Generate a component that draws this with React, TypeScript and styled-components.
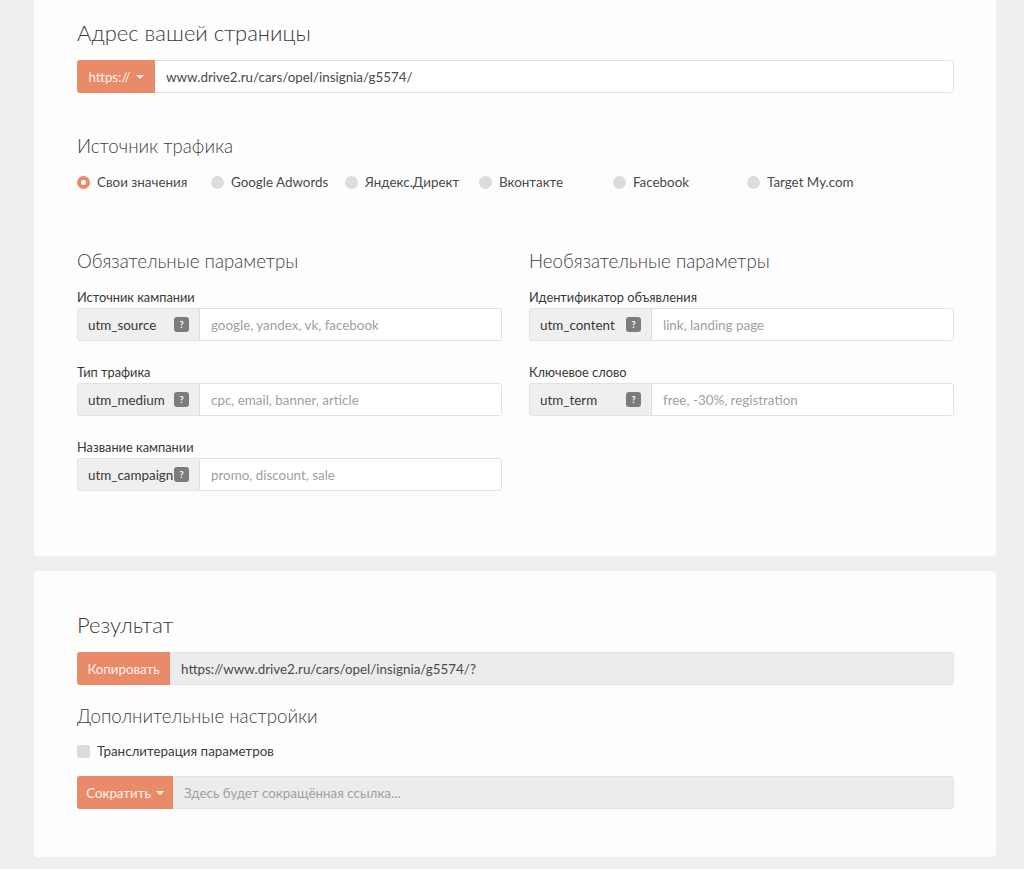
import React from "react";
import styled, { createGlobalStyle } from "styled-components";

const ORANGE = "#e98a68";

const Global = createGlobalStyle`
  html, body { margin: 0; padding: 0; }
  body {
    background: #efeff0;
    font-family: "Lato", "Open Sans", sans-serif;
    color: #3d3d3d;
  }
  * { box-sizing: border-box; }
`;

const Page = styled.div`
  display: flex;
  flex-direction: column;
  gap: 15px;
  padding: 0 28px 12px 34px;
`;

const Card = styled.section<{ $top: number; $bottom: number }>`
  background: #fdfdfd;
  border-radius: ${(p) => (p.$top < 25 ? "0 0 4px 4px" : "4px")};
  padding: ${(p) => p.$top}px 42px ${(p) => p.$bottom}px 43px;
  display: flex;
  flex-direction: column;
`;

const Title = styled.h2<{ $mt?: number; $mb?: number }>`
  margin: ${(p) => p.$mt ?? 0}px 0 ${(p) => p.$mb ?? 0}px;
  font-size: 22px;
  font-weight: 300;
  color: #3a3a3a;
  line-height: 28px;
`;

const SubTitle = styled.h3<{ $mt?: number; $mb?: number }>`
  margin: ${(p) => p.$mt ?? 0}px 0 ${(p) => p.$mb ?? 0}px;
  font-size: 18.7px;
  font-weight: 300;
  color: #3f3f3f;
  line-height: 24px;
`;

const Group = styled.div`
  display: flex;
  height: 33px;
  border-radius: 3px;
  overflow: hidden;
`;

const OrangeBtn = styled.div<{ $w: number }>`
  width: ${(p) => p.$w}px;
  flex: none;
  background: ${ORANGE};
  color: #fff3ee;
  font-size: 13.3px;
  display: flex;
  align-items: center;
  justify-content: center;
  gap: 5px;
`;

const Caret = styled.span`
  width: 0;
  height: 0;
  border-left: 4px solid transparent;
  border-right: 4px solid transparent;
  border-top: 4px solid #fff3ee;
  margin-top: 1px;
`;

const Field = styled.div<{ $filled?: boolean; $muted?: boolean }>`
  flex: 1;
  display: flex;
  align-items: center;
  padding: 0 11px;
  font-size: 13.4px;
  color: ${(p) => (p.$muted ? "#a0a0a0" : "#4a4a4a")};
  background: ${(p) => (p.$filled ? "#ececed" : "#fff")};
  border: 1px solid ${(p) => (p.$filled ? "#e4e4e5" : "#e2e2e2")};
  border-left: none;
  border-radius: 0 3px 3px 0;
`;

const RadioRow = styled.div`
  display: flex;
  margin-top: 14px;
  margin-bottom: 57px;
`;

const RadioItem = styled.label`
  width: 134px;
  display: flex;
  align-items: center;
  gap: 7px;
  font-size: 13.4px;
  color: #4a4a4a;
  height: 20px;
`;

const RadioDot = styled.span<{ $on?: boolean }>`
  width: 13px;
  height: 13px;
  border-radius: 50%;
  flex: none;
  background: ${(p) => (p.$on ? "#fff" : "#dcdcdd")};
  border: ${(p) => (p.$on ? `4px solid ${ORANGE}` : "none")};
`;

const Columns = styled.div`
  display: grid;
  grid-template-columns: 1fr 1fr;
  column-gap: 27px;
`;

const Column = styled.div`
  display: flex;
  flex-direction: column;
`;

const Param = styled.div`
  display: flex;
  flex-direction: column;
  margin-top: 16px;
  & + & { margin-top: 23px; }
`;

const Label = styled.div`
  font-size: 12.8px;
  color: #383838;
  line-height: 17px;
  margin-bottom: 2px;
`;

const Addon = styled.div`
  width: 123px;
  flex: none;
  background: #efeff0;
  border: 1px solid #e2e2e2;
  border-right: 1px solid #dedede;
  border-radius: 3px 0 0 3px;
  display: flex;
  align-items: center;
  justify-content: space-between;
  padding: 0 10px 0 10px;
  font-size: 13.4px;
  color: #383838;
`;

const Help = styled.span`
  width: 15px;
  height: 15px;
  border-radius: 3px;
  background: #7b7c7e;
  color: #fff;
  font-size: 9px;
  font-weight: 700;
  display: flex;
  align-items: center;
  justify-content: center;
  flex: none;
`;

const CheckRow = styled.label`
  display: flex;
  align-items: center;
  gap: 7px;
  font-size: 13.4px;
  color: #3d3d3d;
  margin: 14px 0 16px;
  height: 18px;
`;

const CheckBox = styled.span`
  width: 13px;
  height: 13px;
  border-radius: 2px;
  background: #dcdcdd;
`;

const required = [
  { label: "Источник кампании", key: "utm_source", ph: "google, yandex, vk, facebook" },
  { label: "Тип трафика", key: "utm_medium", ph: "cpc, email, banner, article" },
  { label: "Название кампании", key: "utm_campaign", ph: "promo, discount, sale" },
];

const optional = [
  { label: "Идентификатор объявления", key: "utm_content", ph: "link, landing page" },
  { label: "Ключевое слово", key: "utm_term", ph: "free, -30%, registration" },
];

const sources = ["Свои значения", "Google Adwords", "Яндекс.Директ", "Вконтакте", "Facebook", "Target My.com"];

function ParamField({ label, k, ph }: { label: string; k: string; ph: string }) {
  return (
    <Param>
      <Label>{label}</Label>
      <Group>
        <Addon>
          <span>{k}</span>
          <Help>?</Help>
        </Addon>
        <Field $muted>{ph}</Field>
      </Group>
    </Param>
  );
}

export default function App() {
  return (
    <>
      <Global />
      <Page>
        <Card $top={19} $bottom={65}>
          <Title $mb={13}>Адрес вашей страницы</Title>
          <Group>
            <OrangeBtn $w={78}>
              https:// <Caret />
            </OrangeBtn>
            <Field>www.drive2.ru/cars/opel/insignia/g5574/</Field>
          </Group>
          <SubTitle $mt={41}>Источник трафика</SubTitle>
          <RadioRow>
            {sources.map((s, i) => (
              <RadioItem key={s}>
                <RadioDot $on={i === 0} />
                {s}
              </RadioItem>
            ))}
          </RadioRow>
          <Columns>
            <Column>
              <SubTitle>Обязательные параметры</SubTitle>
              {required.map((r) => (
                <ParamField key={r.key} label={r.label} k={r.key} ph={r.ph} />
              ))}
            </Column>
            <Column>
              <SubTitle>Необязательные параметры</SubTitle>
              {optional.map((r) => (
                <ParamField key={r.key} label={r.label} k={r.key} ph={r.ph} />
              ))}
            </Column>
          </Columns>
        </Card>
        <Card $top={40} $bottom={48}>
          <Title $mb={13}>Результат</Title>
          <Group>
            <OrangeBtn $w={93}>Копировать</OrangeBtn>
            <Field $filled>https://www.drive2.ru/cars/opel/insignia/g5574/?</Field>
          </Group>
          <SubTitle $mt={19}>Дополнительные настройки</SubTitle>
          <CheckRow>
            <CheckBox />
            Транслитерация параметров
          </CheckRow>
          <Group>
            <OrangeBtn $w={96}>
              Сократить <Caret />
            </OrangeBtn>
            <Field $filled $muted>Здесь будет сокращённая ссылка...</Field>
          </Group>
        </Card>
      </Page>
    </>
  );
}
